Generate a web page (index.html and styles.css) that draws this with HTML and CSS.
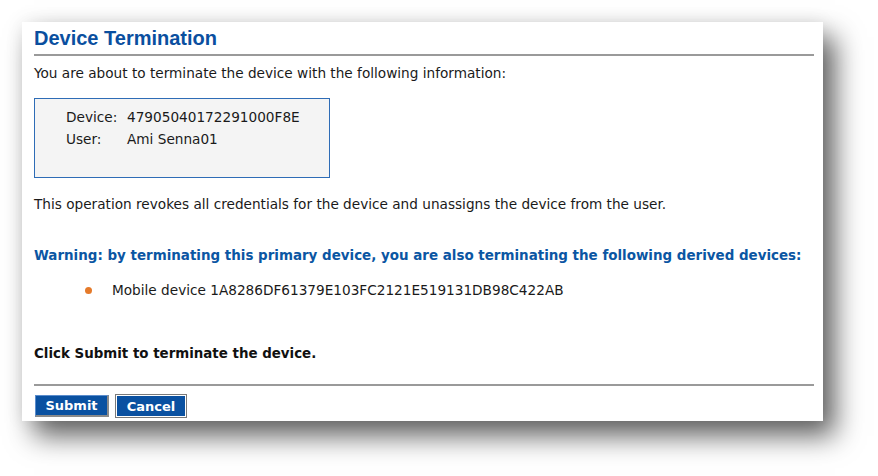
FILE: index.html
```html
<!DOCTYPE html>
<html>
<head>
<meta charset="utf-8">
<link rel="stylesheet" href="styles.css">
</head>
<body>
<div class="panel">
  <h1 class="title">Device Termination</h1>
  <p class="intro">You are about to terminate the device with the following information:</p>
  <div class="infobox">
    <div class="row"><span class="label">Device:</span><span class="value">47905040172291000F8E</span></div>
    <div class="row"><span class="label">User:</span><span class="value">Ami Senna01</span></div>
  </div>
  <p class="note">This operation revokes all credentials for the device and unassigns the device from the user.</p>
  <p class="warning">Warning: by terminating this primary device, you are also terminating the following derived devices:</p>
  <ul class="derived">
    <li>Mobile device 1A8286DF61379E103FC2121E519131DB98C422AB</li>
  </ul>
  <p class="confirm">Click Submit to terminate the device.</p>
  <div class="actions">
    <button class="btn btn-submit">Submit</button>
    <button class="btn btn-cancel">Cancel</button>
  </div>
</div>
</body>
</html>
```
FILE: styles.css
```css
html, body {
  margin: 0;
  padding: 0;
  background: #ffffff;
}
body {
  width: 878px;
  height: 476px;
  overflow: hidden;
  padding: 22px 0 0 22px;
  box-sizing: border-box;
  font-family: "DejaVu Sans", Verdana, sans-serif;
  font-size: 13.65px;
  color: #1a1a1a;
}
.panel {
  width: 801px;
  height: 399px;
  box-sizing: border-box;
  background: #ffffff;
  padding: 4px 9px 0 12px;
  box-shadow: 12px 15px 26px rgba(0, 0, 0, 0.62), 0 0 18px rgba(0, 0, 0, 0.07);
}
.title {
  margin: 0;
  font-family: "Liberation Sans", Arial, sans-serif;
  font-size: 20px;
  font-weight: bold;
  color: #0a4f9f;
  line-height: 24px;
  padding-bottom: 4px;
  border-bottom: 2px solid #9a9a9a;
}
.intro {
  margin: 8px 0 0 0;
  line-height: 18px;
}
.infobox {
  margin-top: 16px;
  width: 296px;
  height: 80px;
  box-sizing: border-box;
  border: 1px solid #2e6cb6;
  background: #f4f4f4;
  padding: 7px 0 0 31px;
}
.row {
  display: flex;
  line-height: 22px;
}
.label {
  width: 61px;
}
.note {
  margin: 17px 0 0 0;
  line-height: 18px;
}
.warning {
  margin: 34px 0 0 0;
  line-height: 18px;
  font-weight: bold;
  font-size: 13.45px;
  color: #0b56a3;
}
.derived {
  margin: 16px 0 0 0;
  padding: 0 0 0 78px;
  list-style: none;
  line-height: 18px;
}
.derived li {
  position: relative;
}
.derived li::before {
  content: "";
  position: absolute;
  left: -27px;
  top: 6px;
  width: 7px;
  height: 7px;
  border-radius: 50%;
  background: #e57a2a;
}
.confirm {
  margin: 46px 0 0 0;
  line-height: 18px;
  font-weight: bold;
  font-size: 13.4px;
  color: #111;
}
.actions {
  margin-top: 21px;
  padding-top: 9px;
  border-top: 2px solid #9a9a9a;
  display: flex;
  gap: 6px;
  align-items: center;
}
.btn {
  font-family: "DejaVu Sans", Verdana, sans-serif;
  font-size: 13px;
  font-weight: bold;
  color: #ffffff;
  background: #0a51a1;
  margin: 0;
  cursor: pointer;
  line-height: 17px;
}
.btn-submit {
  width: 74px;
  height: 22px;
  margin-left: 1px;
  margin-top: -1px;
  border: none;
  border-right: 2px solid #8a8a8a;
  border-bottom: 2px solid #8a8a8a;
  border-top: 1px solid #5a8ccc;
  border-left: 1px solid #5a8ccc;
  padding: 0;
}
.btn-cancel {
  width: 72px;
  height: 24px;
  margin-top: -1px;
  border: 1px solid #7a7a7a;
  outline: none;
  box-shadow: inset 0 0 0 1px #ffffff;
  padding: 0;
}
```
